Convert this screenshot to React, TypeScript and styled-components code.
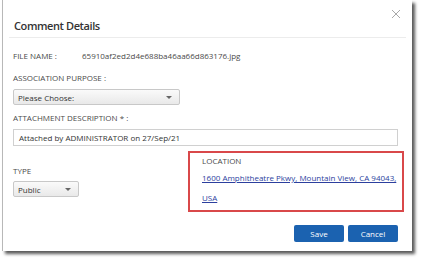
import React from 'react';
import styled, { createGlobalStyle } from 'styled-components';

const GlobalStyle = createGlobalStyle`
  html, body {
    margin: 0;
    padding: 0;
    background: #ffffff;
    width: 423px;
    height: 266px;
    overflow: hidden;
  }
  body {
    font-family: "Open Sans", "Noto Sans", sans-serif;
  }
`;

const App = () => {
  return (
    <>
      <GlobalStyle />
      <Page>
        <Dialog>
          <CloseButton aria-label="close">
            <svg width="10" height="10" viewBox="0 0 10 10">
              <path d="M1 1 L9 9 M9 1 L1 9" stroke="#a8a8a8" strokeWidth="1" fill="none" />
            </svg>
          </CloseButton>
          <Header>
            <Title>Comment Details</Title>
          </Header>
          <Body>
            <FileRow>
              <Label>FILE NAME :</Label>
              <Value>65910af2ed2d4e688ba46aa66d863176.jpg</Value>
            </FileRow>
            <Field>
              <Label>ASSOCIATION PURPOSE :</Label>
              <Select width={167}>
                <span>Please Choose:</span>
                <Caret />
              </Select>
            </Field>
            <Field>
              <Label>ATTACHMENT DESCRIPTION * :</Label>
              <TextInput>Attached by ADMINISTRATOR on 27/Sep/21</TextInput>
            </Field>
            <BottomRow>
              <TypeField>
                <Label>TYPE</Label>
                <Select width={66}>
                  <span>Public</span>
                  <Caret />
                </Select>
              </TypeField>
              <LocationBox>
                <Label>LOCATION</Label>
                <LocationLink href="#">
                  1600 Amphitheatre Pkwy, Mountain View, CA 94043,
                  <br />
                  USA
                </LocationLink>
              </LocationBox>
            </BottomRow>
            <Actions>
              <Button>Save</Button>
              <Button>Cancel</Button>
            </Actions>
          </Body>
        </Dialog>
      </Page>
    </>
  );
};
export default App;

const Page = styled.div`
  width: 423px;
  height: 266px;
  padding: 0 0 0 2px;
  box-sizing: border-box;
`;

const Dialog = styled.div`
  position: relative;
  width: 410px;
  height: 251px;
  box-sizing: border-box;
  background: #ffffff;
  border-left: 1px solid #b8b8b8;
  box-shadow: 3px 3px 3px rgba(0, 0, 0, 0.65);
`;

const CloseButton = styled.div`
  position: absolute;
  top: 9px;
  right: 11px;
  width: 10px;
  height: 10px;
  display: flex;
`;

const Header = styled.div`
  margin: 0 6px 0 6px;
  padding: 18px 0 0 5px;
  height: 19px;
  border-bottom: 1px solid #ececec;
`;

const Title = styled.div`
  font-size: 11px;
  font-weight: 600;
  letter-spacing: -0.4px;
  color: #333333;
  line-height: 16px;
`;

const Body = styled.div`
  padding: 12px 14px 0 10px;
  display: flex;
  flex-direction: column;
`;

const Label = styled.div`
  font-size: 8px;
  color: #4a4a4a;
  line-height: 12px;
`;

const Value = styled.div`
  font-size: 8px;
  color: #4a4a4a;
  line-height: 12px;
`;

const FileRow = styled.div`
  display: grid;
  grid-template-columns: 69px auto;
  margin-bottom: 10px;
`;

const Field = styled.div`
  display: flex;
  flex-direction: column;
  gap: 5px;
  margin-bottom: 7px;
`;

const Select = styled.div<{ width: number }>`
  width: ${(p) => p.width}px;
  height: 16px;
  box-sizing: border-box;
  border: 1px solid #c8c8c8;
  border-radius: 2px;
  background: linear-gradient(#fafafa, #e9e9e9);
  display: flex;
  align-items: center;
  justify-content: space-between;
  padding: 0 7px 0 4px;
  font-size: 8px;
  color: #333333;
`;

const Caret = styled.span`
  width: 0;
  height: 0;
  border-left: 3px solid transparent;
  border-right: 3px solid transparent;
  border-top: 3px solid #666666;
`;

const TextInput = styled.div`
  height: 17px;
  box-sizing: border-box;
  border: 1px solid #d0d0d0;
  display: flex;
  align-items: center;
  padding: 0 5px;
  font-size: 8px;
  color: #333333;
`;

const BottomRow = styled.div`
  display: flex;
  justify-content: space-between;
  margin-top: -2px;
`;

const TypeField = styled.div`
  display: flex;
  flex-direction: column;
  gap: 4px;
  padding-top: 14px;
`;

const LocationBox = styled.div`
  width: 216px;
  height: 61px;
  box-sizing: border-box;
  border: 2px solid #d9484a;
  margin-right: -6px;
  padding: 2px 0 0 12px;
  display: flex;
  flex-direction: column;
  gap: 6px;
`;

const LocationLink = styled.a`
  font-size: 8px;
  line-height: 20px;
  color: #2c3f9e;
  text-decoration: underline;
  margin-top: -5px;
`;

const Actions = styled.div`
  display: flex;
  justify-content: flex-end;
  gap: 4px;
  margin-top: 13px;
`;

const Button = styled.button`
  width: 50px;
  height: 17px;
  border: none;
  border-radius: 2px;
  background: #1b62b0;
  color: #ffffff;
  font-family: "Open Sans", "Noto Sans", sans-serif;
  font-size: 8px;
  padding: 0;
`;
